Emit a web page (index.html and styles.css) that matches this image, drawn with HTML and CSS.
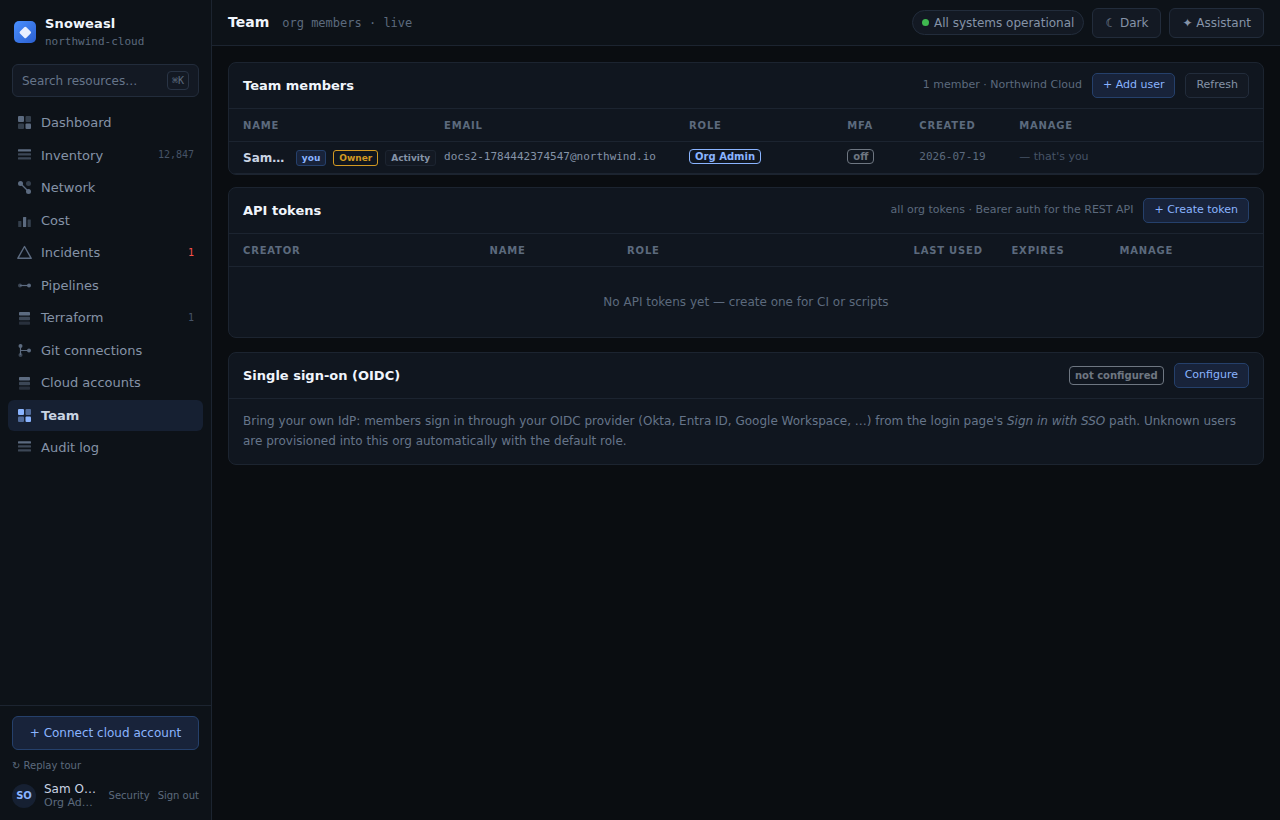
FILE: index.html
```html
<!DOCTYPE html>
<html lang="en">
<head>
<meta charset="utf-8">
<meta name="viewport" content="width=device-width, initial-scale=1">
<title>Team · Snoweasl</title>
<link rel="stylesheet" href="styles.css">
</head>
<body>
<svg class="sprite" aria-hidden="true">
  <symbol id="i-grid" viewBox="0 0 15 15"><rect x="1" y="1" width="6" height="6" rx="1"/><rect x="8.5" y="1" width="5.5" height="6" rx="1" opacity=".5"/><rect x="1" y="8.5" width="6" height="5.5" rx="1" opacity=".5"/><rect x="8.5" y="8.5" width="5.5" height="5.5" rx="1"/></symbol>
  <symbol id="i-list" viewBox="0 0 15 15"><rect x="1" y="1.2" width="13" height="2.4" rx=".5"/><rect x="1" y="5.200" width="13" height="2.4" rx=".5" opacity=".6"/><rect x="1" y="9.200" width="13" height="2.4" rx=".5" opacity=".6"/></symbol>
  <symbol id="i-network" viewBox="0 0 15 15"><path d="M3.5 3.5 11.5 11.5" stroke="currentColor" stroke-width="1.3"/><circle cx="3.5" cy="3.5" r="2.5"/><circle cx="11.5" cy="3.5" r="2.5" opacity=".5"/><circle cx="11.5" cy="11.5" r="2.5"/></symbol>
  <symbol id="i-cost" viewBox="0 0 15 15"><rect x="1.2" y="8" width="3.2" height="6" rx=".5" opacity=".5"/><rect x="6" y="4" width="3.2" height="10" rx=".5"/><rect x="10.600" y="6.500" width="3.2" height="7.500" rx=".5" opacity=".5"/></symbol>
  <symbol id="i-alert" viewBox="0 0 15 15"><path d="M7.500 1.500 14.200 13.300H.8Z" fill="none" stroke="currentColor" stroke-width="1.400" stroke-linejoin="round"/></symbol>
  <symbol id="i-pipe" viewBox="0 0 15 15"><path d="M3 7.500H12" stroke="currentColor" stroke-width="1.200"/><circle cx="3" cy="7.500" r="2" opacity=".6"/><circle cx="12" cy="7.500" r="2"/></symbol>
  <symbol id="i-stack" viewBox="0 0 15 15"><rect x="2" y="2" width="11" height="3.500" rx=".7"/><rect x="2" y="6.800" width="11" height="3.400" rx=".7" opacity=".6"/><rect x="2" y="11.500" width="11" height="3.300" rx=".7" opacity=".35"/></symbol>
  <symbol id="i-git" viewBox="0 0 15 15"><path d="M3.500 3V12M3.500 7.500H12" stroke="currentColor" stroke-width="1.200" fill="none"/><circle cx="3.500" cy="3" r="2"/><circle cx="12" cy="7.500" r="2"/><circle cx="3.500" cy="12" r="2" opacity=".6"/></symbol>
</svg>
<div class="app">
  <aside class="sidebar">
    <div class="brand">
      <svg class="brand-logo" viewBox="0 0 22 22" aria-hidden="true"><defs><linearGradient id="logo" x1="0" y1="0" x2="1" y2="1"><stop offset="0" stop-color="#4a90ff"/><stop offset="1" stop-color="#2b5fd0"/></linearGradient></defs><rect width="22" height="22" rx="5" fill="url(#logo)"/><rect x="6.800" y="7" width="9" height="9" rx="1.500" transform="rotate(45 11.300 11.500)" fill="#e8efff"/></svg>
      <div class="brand-text">
        <div class="brand-name">Snoweasl</div>
        <div class="brand-org">northwind-cloud</div>
      </div>
    </div>
    <label class="search">
      <input class="search-input" type="text" placeholder="Search resources…" aria-label="Search resources">
      <kbd class="kbd">⌘K</kbd>
    </label>
    <nav class="nav">
      <a class="nav-item" href="#"><svg class="icon"><use href="#i-grid"/></svg><span class="nav-label">Dashboard</span></a>
      <a class="nav-item" href="#"><svg class="icon"><use href="#i-list"/></svg><span class="nav-label">Inventory</span><span class="count">12,847</span></a>
      <a class="nav-item" href="#"><svg class="icon"><use href="#i-network"/></svg><span class="nav-label">Network</span></a>
      <a class="nav-item" href="#"><svg class="icon"><use href="#i-cost"/></svg><span class="nav-label">Cost</span></a>
      <a class="nav-item" href="#"><svg class="icon"><use href="#i-alert"/></svg><span class="nav-label">Incidents</span><span class="count count-alert">1</span></a>
      <a class="nav-item" href="#"><svg class="icon"><use href="#i-pipe"/></svg><span class="nav-label">Pipelines</span></a>
      <a class="nav-item" href="#"><svg class="icon"><use href="#i-stack"/></svg><span class="nav-label">Terraform</span><span class="count">1</span></a>
      <a class="nav-item" href="#"><svg class="icon"><use href="#i-git"/></svg><span class="nav-label">Git connections</span></a>
      <a class="nav-item" href="#"><svg class="icon"><use href="#i-stack"/></svg><span class="nav-label">Cloud accounts</span></a>
      <a class="nav-item active" href="#" aria-current="page"><svg class="icon"><use href="#i-grid"/></svg><span class="nav-label">Team</span></a>
      <a class="nav-item" href="#"><svg class="icon"><use href="#i-list"/></svg><span class="nav-label">Audit log</span></a>
    </nav>
    <div class="side-foot">
      <button class="connect" type="button">+ Connect cloud account</button>
      <button class="link-btn replay" type="button">↻ Replay tour</button>
      <div class="user">
        <span class="avatar">SO</span>
        <div class="user-text">
          <div class="user-name">Sam Owner</div>
          <div class="user-role">Org Admin</div>
        </div>
        <button class="link-btn" type="button">Security</button>
        <button class="link-btn" type="button">Sign out</button>
      </div>
    </div>
  </aside>
  <div class="main">
    <header class="topbar">
      <h1 class="page-title">Team</h1>
      <span class="page-sub">org members · live</span>
      <div class="top-actions">
        <span class="status"><span class="dot"></span>All systems operational</span>
        <button class="top-btn" type="button">☾ Dark</button>
        <button class="top-btn" type="button">✦ Assistant</button>
      </div>
    </header>
    <main class="content">
      <section class="card card-members">
        <div class="card-head">
          <h2 class="card-title">Team members</h2>
          <span class="hint">1 member · Northwind Cloud</span>
          <button class="btn btn-primary" type="button">+ Add user</button>
          <button class="btn" type="button">Refresh</button>
        </div>
        <table class="table">
          <colgroup><col class="m-name"><col class="m-email"><col class="m-role"><col class="m-mfa"><col class="m-created"><col></colgroup>
          <thead><tr><th>Name</th><th>Email</th><th>Role</th><th>MFA</th><th>Created</th><th>Manage</th></tr></thead>
          <tbody>
            <tr>
              <td><div class="member"><span class="member-name">Sam Owner</span><span class="tag tag-you">you</span><span class="tag tag-owner">Owner</span><button class="tag tag-activity" type="button">Activity</button></div></td>
              <td class="mono">docs2-1784442374547@northwind.io</td>
              <td><span class="badge badge-blue">Org Admin</span></td>
              <td><span class="badge">off</span></td>
              <td class="mono dim">2026-07-19</td>
              <td class="faint">— that's you</td>
            </tr>
          </tbody>
        </table>
      </section>
      <section class="card">
        <div class="card-head">
          <h2 class="card-title">API tokens</h2>
          <span class="hint">all org tokens · Bearer auth for the REST API</span>
          <button class="btn btn-primary" type="button">+ Create token</button>
        </div>
        <table class="table">
          <colgroup><col class="t-creator"><col class="t-name"><col class="t-role"><col class="t-used"><col class="t-expires"><col></colgroup>
          <thead><tr><th>Creator</th><th>Name</th><th>Role</th><th>Last used</th><th>Expires</th><th>Manage</th></tr></thead>
          <tbody><tr><td class="empty" colspan="6">No API tokens yet — create one for CI or scripts</td></tr></tbody>
        </table>
      </section>
      <section class="card">
        <div class="card-head">
          <h2 class="card-title">Single sign-on (OIDC)</h2>
          <span class="badge badge-lg">not configured</span>
          <button class="btn btn-primary" type="button">Configure</button>
        </div>
        <p class="card-body">Bring your own IdP: members sign in through your OIDC provider (Okta, Entra ID, Google Workspace, …) from the login page's <em>Sign in with SSO</em> path. Unknown users are provisioned into this org automatically with the default role.</p>
      </section>
    </main>
  </div>
</div>
</body>
</html>
```
FILE: styles.css
```css
:root {
  --bg: #0a0d11;
  --panel: #0d1218;
  --card: #10161f;
  --control: #131923;
  --line: #1c2430;
  --line-strong: #222c3b;
  --text: #c9d4e3;
  --text-2: #8593a7;
  --text-3: #5c6a7d;
  --text-4: #465366;
  --blue: #8ab4ff;
  --blue-bg: #18233a;
  --blue-line: #25406b;
  --mono: "DejaVu Sans Mono", monospace;
}
* { box-sizing: border-box; }
body {
  margin: 0;
  background: var(--bg);
  color: var(--text);
  font: 13px/1.5 "DejaVu Sans", sans-serif;
}
button, input { font: inherit; color: inherit; margin: 0; }
button { cursor: pointer; white-space: nowrap; }
.sprite { position: absolute; width: 0; height: 0; }
.app { display: flex; min-height: 100vh; }

.sidebar {
  width: 212px;
  flex: none;
  display: flex;
  flex-direction: column;
  background: var(--panel);
  border-right: 1px solid var(--line);
}
.brand { display: flex; align-items: center; gap: 9px; padding: 14px; }
.brand-logo { width: 22px; height: 22px; flex: none; }
.brand-name { font-weight: 700; line-height: 20px; letter-spacing: 0.01em; color: #f0f5fc; }
.brand-org { font: 11px/16px var(--mono); color: var(--text-3); }
.search {
  display: flex;
  align-items: center;
  height: 33px;
  margin: 0 12px 10px;
  padding: 0 9px;
  background: var(--control);
  border: 1px solid var(--line-strong);
  border-radius: 6px;
}
.search-input { flex: 1; min-width: 0; padding: 0; border: 0; outline: 0; background: none; font-size: 12px; }
.search-input::placeholder { color: #66758a; opacity: 1; }
.kbd {
  font: 10px/17px var(--mono);
  padding: 0 4px;
  border: 1px solid #293445;
  border-radius: 4px;
  color: var(--text-3);
}
.nav { display: flex; flex-direction: column; gap: 1px; padding: 0 8px; }
.nav-item {
  display: flex;
  align-items: center;
  gap: 9px;
  padding: 6px 9px;
  border-radius: 6px;
  color: var(--text-2);
  text-decoration: none;
}
.nav-label { flex: 1; }
.icon { width: 15px; height: 15px; flex: none; fill: currentColor; color: #5c6b80; }
.nav-item.active { background: #162032; color: var(--text); font-weight: 700; }
.nav-item.active .icon { color: var(--blue); }
.count { font: 10px/16px var(--mono); color: var(--text-4); }
.count-alert { color: #f85149; }

.side-foot { margin-top: auto; padding: 10px 12px; border-top: 1px solid var(--line); }
.connect {
  display: block;
  width: 100%;
  height: 34px;
  padding: 0;
  border: 1px solid var(--blue-line);
  border-radius: 6px;
  background: var(--blue-bg);
  color: var(--blue);
  font-size: 12px;
}
.link-btn { flex: none; padding: 0; border: 0; background: none; color: var(--text-3); font-size: 10px; line-height: 16px; }
.replay { display: block; margin: 8px 0; }
.user { display: flex; align-items: center; gap: 8px; }
.avatar {
  width: 24px;
  flex: none;
  border-radius: 50%;
  background: #162032;
  color: var(--blue);
  font-size: 10px;
  font-weight: 700;
  line-height: 24px;
  text-align: center;
}
.user-text { flex: 1; min-width: 0; }
.user-name, .user-role { overflow: hidden; text-overflow: ellipsis; white-space: nowrap; line-height: 14px; }
.user-name { font-size: 12px; }
.user-role { font-size: 11px; color: var(--text-3); }

.main { flex: 1; min-width: 0; }
.topbar {
  display: flex;
  align-items: center;
  height: 46px;
  padding: 0 16px;
  background: var(--panel);
  border-bottom: 1px solid var(--line);
}
.page-title { margin: 0 13px 0 0; font-size: 14px; color: #f0f5fc; }
.page-sub { font: 12px/16px var(--mono); color: var(--text-3); }
.top-actions { display: flex; align-items: center; gap: 8px; margin-left: auto; }
.status {
  display: flex;
  align-items: center;
  gap: 5px;
  height: 25px;
  padding: 0 9px;
  border: 1px solid var(--line-strong);
  border-radius: 13px;
  background: var(--control);
  color: var(--text-2);
  font-size: 12px;
}
.dot { width: 7px; height: 7px; border-radius: 50%; background: #3fb950; }
.top-btn {
  height: 30px;
  padding: 0 12px;
  border: 1px solid var(--line-strong);
  border-radius: 6px;
  background: var(--control);
  color: var(--text-2);
  font-size: 12px;
}

.content { padding: 16px; }
.card {
  margin-bottom: 14px;
  border: 1px solid var(--line);
  border-radius: 8px;
  background: var(--card);
  overflow: hidden;
}
.card-members { margin-bottom: 12px; }
.card-head {
  display: flex;
  align-items: center;
  gap: 10px;
  padding: 10px 14px;
  border-bottom: 1px solid var(--line);
}
.card-title { flex: 1; margin: 0; font-size: 13px; line-height: 18px; color: #f0f5fc; }
.hint { font-size: 11px; color: var(--text-3); }
.btn {
  height: 25px;
  padding: 0 10px;
  border: 1px solid var(--line-strong);
  border-radius: 5px;
  background: var(--control);
  color: var(--text-2);
  font-size: 11px;
}
.btn-primary { background: var(--blue-bg); border-color: var(--blue-line); color: var(--blue); }

.table { width: 100%; table-layout: fixed; border-collapse: separate; border-spacing: 0; }
.m-name { width: 20.8%; }
.m-email { width: 23.7%; }
.m-role { width: 15.3%; }
.m-mfa { width: 72px; }
.m-created { width: 100px; }
.t-creator { width: 25.2%; }
.t-name { width: 13.3%; }
.t-role { width: 27.7%; }
.t-used { width: 98px; }
.t-expires { width: 108px; }
.table th, .table td { padding: 0 8px 0 0; border-bottom: 1px solid var(--line); text-align: left; white-space: nowrap; }
.table th {
  height: 33px;
  color: var(--text-3);
  font-size: 10px;
  letter-spacing: 0.08em;
  text-transform: uppercase;
}
.table td { height: 32px; font-size: 11px; }
.table th:first-child, .table td:first-child { padding-left: 14px; }
.table .mono { font-family: var(--mono); color: var(--text-2); }
.table .dim { color: var(--text-3); }
.table .faint { color: var(--text-4); }
.table .empty { height: 70px; padding: 0 14px; border: 0; text-align: center; font-size: 12px; color: var(--text-3); }
.member { display: flex; align-items: center; gap: 7px; }
.member-name { flex: 1; min-width: 0; margin-right: 3px; overflow: hidden; text-overflow: ellipsis; font-size: 12px; font-weight: 700; }
.tag {
  flex: none;
  padding: 0 5px;
  border: 1px solid var(--line-strong);
  border-radius: 3px;
  background: none;
  color: var(--text-2);
  font-size: 9px;
  font-weight: 700;
  line-height: 14px;
}
.tag-you { background: var(--blue-bg); border-color: var(--blue-line); color: var(--blue); }
.tag-owner { border-color: #d29922; color: #d29922; }
.tag-activity { background: var(--control); border-color: var(--line); }
.badge {
  display: inline-block;
  padding: 0 5px;
  border: 1px solid #6e7681;
  border-radius: 4px;
  color: #6e7681;
  font-size: 10px;
  font-weight: 700;
  line-height: 13px;
}
.badge-blue { border-color: var(--blue); color: var(--blue); }
.badge-lg { line-height: 17px; }
.card-body { margin: 0; padding: 12px 14px 13px; font-size: 12px; line-height: 20px; color: #66758a; }
```
